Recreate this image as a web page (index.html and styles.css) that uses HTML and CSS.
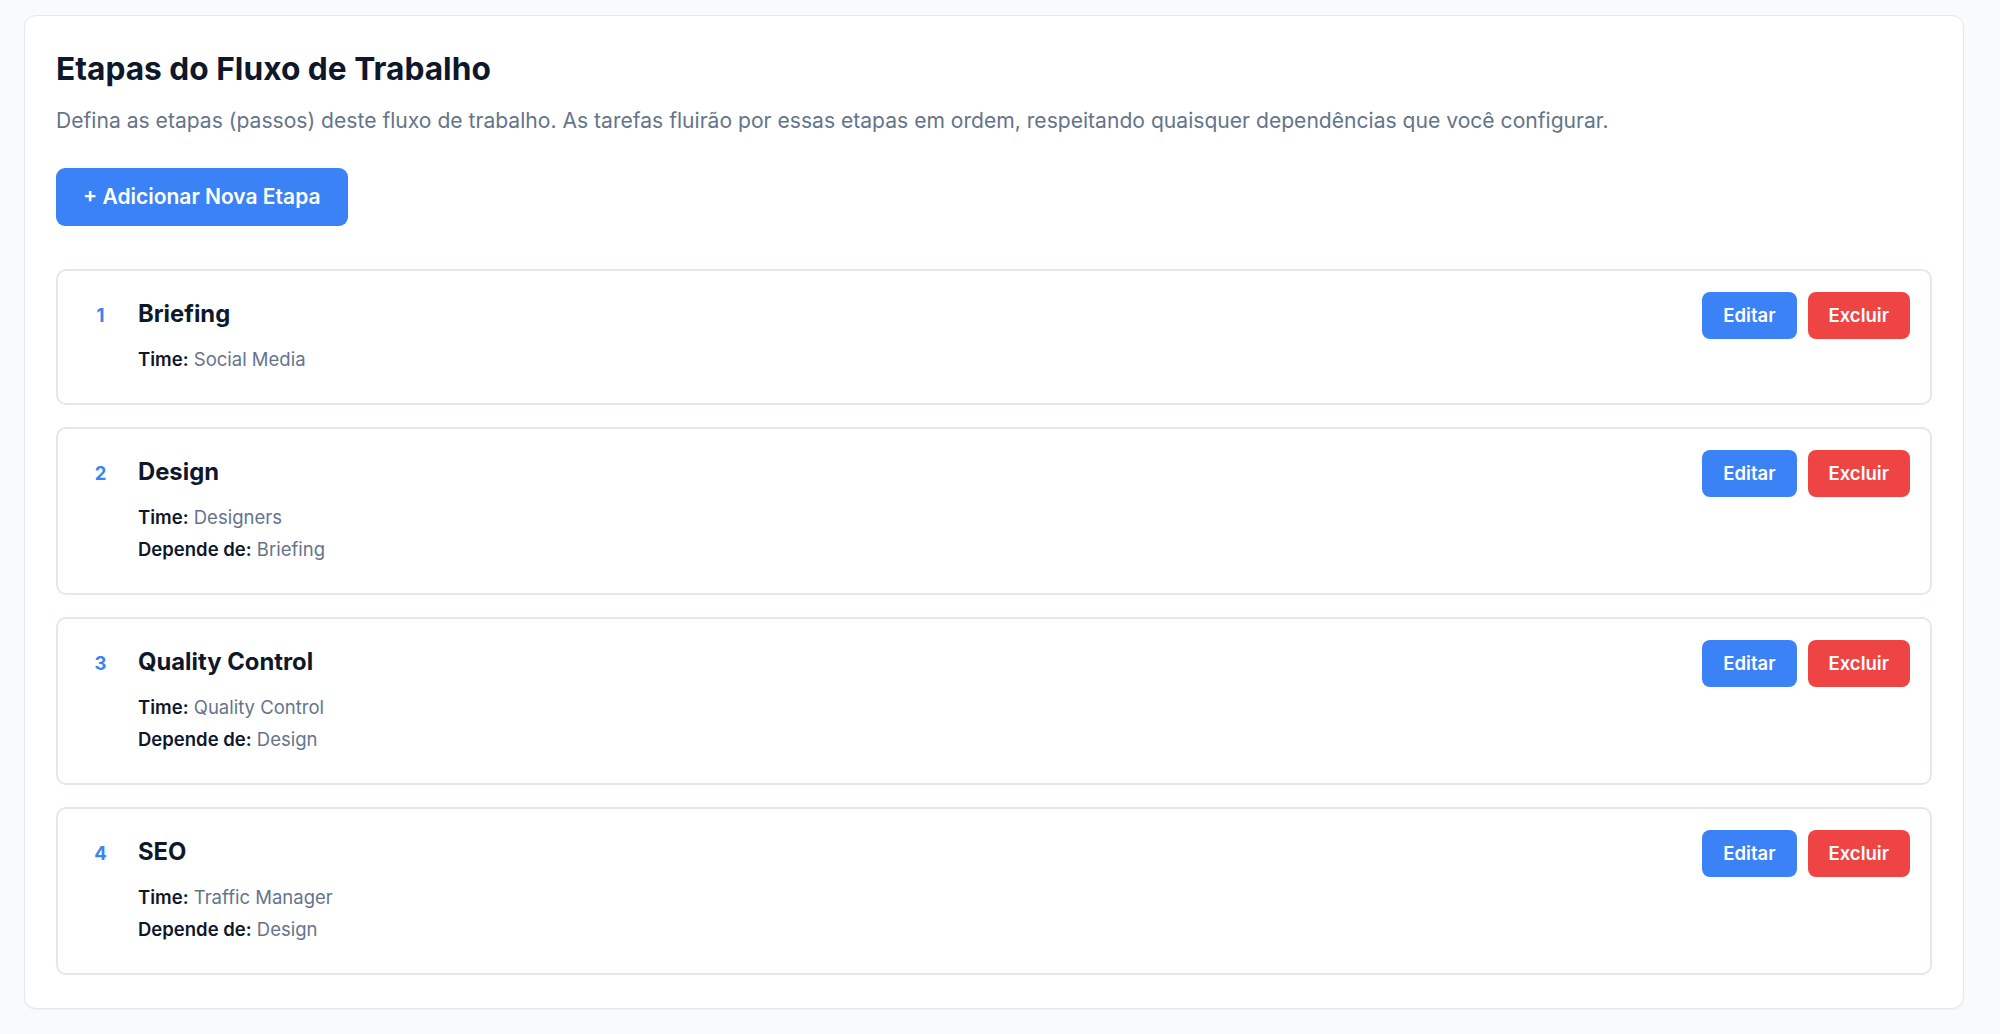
FILE: index.html
```html
<!DOCTYPE html>
<html lang="pt-BR">
<head>
<meta charset="utf-8">
<title>Etapas do Fluxo de Trabalho</title>
<link rel="stylesheet" href="styles.css">
</head>
<body>
  <section class="panel">
    <h1 class="panel-title">Etapas do Fluxo de Trabalho</h1>
    <p class="panel-desc">Defina as etapas (passos) deste fluxo de trabalho. As tarefas fluirão por essas etapas em ordem, respeitando quaisquer dependências que você configurar.</p>
    <button class="btn btn-add" type="button">+ Adicionar Nova Etapa</button>

    <div class="step-list">
      <article class="step">
        <div class="step-main">
          <div class="step-head">
            <span class="step-num">1</span>
            <h3 class="step-title">Briefing</h3>
          </div>
          <p class="step-meta"><strong>Time:</strong> Social Media</p>
        </div>
        <div class="step-actions">
          <button class="btn btn-sm btn-edit" type="button">Editar</button>
          <button class="btn btn-sm btn-delete" type="button">Excluir</button>
        </div>
      </article>

      <article class="step">
        <div class="step-main">
          <div class="step-head">
            <span class="step-num">2</span>
            <h3 class="step-title">Design</h3>
          </div>
          <p class="step-meta"><strong>Time:</strong> Designers</p>
          <p class="step-meta step-meta-next"><strong>Depende de:</strong> Briefing</p>
        </div>
        <div class="step-actions">
          <button class="btn btn-sm btn-edit" type="button">Editar</button>
          <button class="btn btn-sm btn-delete" type="button">Excluir</button>
        </div>
      </article>

      <article class="step">
        <div class="step-main">
          <div class="step-head">
            <span class="step-num">3</span>
            <h3 class="step-title">Quality Control</h3>
          </div>
          <p class="step-meta"><strong>Time:</strong> Quality Control</p>
          <p class="step-meta step-meta-next"><strong>Depende de:</strong> Design</p>
        </div>
        <div class="step-actions">
          <button class="btn btn-sm btn-edit" type="button">Editar</button>
          <button class="btn btn-sm btn-delete" type="button">Excluir</button>
        </div>
      </article>

      <article class="step">
        <div class="step-main">
          <div class="step-head">
            <span class="step-num">4</span>
            <h3 class="step-title">SEO</h3>
          </div>
          <p class="step-meta"><strong>Time:</strong> Traffic Manager</p>
          <p class="step-meta step-meta-next"><strong>Depende de:</strong> Design</p>
        </div>
        <div class="step-actions">
          <button class="btn btn-sm btn-edit" type="button">Editar</button>
          <button class="btn btn-sm btn-delete" type="button">Excluir</button>
        </div>
      </article>
    </div>
  </section>
</body>
</html>
```
FILE: styles.css
```css
* {
  box-sizing: border-box;
}

html, body {
  margin: 0;
  background: #f8fafc;
}

body {
  font-family: Inter, "Noto Sans", "Liberation Sans", sans-serif;
  color: #0f172a;
  padding: 15px 36px 27px 24px;
}

.panel {
  background: #ffffff;
  border: 1px solid #e2e8f0;
  border-radius: 12px;
  padding: 33px 31px 33px 31px;
  box-shadow: 0 1px 2px rgba(15, 23, 42, 0.04);
}

.panel-title {
  margin: 0;
  font-size: 31.7px;
  line-height: 40px;
  font-weight: 700;
  color: #0f172a;
}

.panel-desc {
  margin: 17px 0 0;
  font-size: 21.1px;
  line-height: 30px;
  color: #64748b;
}

.btn {
  font-family: inherit;
  border: 0;
  color: #ffffff;
  font-weight: 600;
  cursor: pointer;
}

.btn-add {
  display: block;
  margin-top: 32px;
  background: #3b82f6;
  font-size: 21px;
  line-height: 28px;
  padding: 15px 27px;
  border-radius: 9px;
}

.step-list {
  margin-top: 43px;
  display: flex;
  flex-direction: column;
  gap: 22.5px;
}

.step {
  display: flex;
  align-items: flex-start;
  border: 2px solid #e2e8f0;
  border-radius: 10px;
  padding: 20px 20px 30.5px 20px;
}

.step-main {
  flex: 1;
}

.step-head {
  display: flex;
  align-items: baseline;
  margin-top: 5px;
}

.step-num {
  width: 45px;
  margin-right: 15px;
  text-align: center;
  font-size: 18.5px;
  font-weight: 700;
  color: #3b82f6;
}

.step-title {
  margin: 0;
  font-size: 23.8px;
  line-height: 35px;
  font-weight: 700;
  color: #0f172a;
}

.step-meta {
  margin: 15px 0 0 60px;
  font-size: 18.5px;
  line-height: 26px;
  color: #64748b;
}

.step-meta strong {
  font-weight: 600;
  color: #0f172a;
}

.step-meta-next {
  margin-top: 6px;
}

.step-actions {
  display: flex;
  gap: 11px;
  margin-top: 1px;
}

.btn-sm {
  font-size: 18.5px;
  line-height: 25px;
  padding: 11px 21px;
  border-radius: 8px;
}

.btn-edit {
  background: #3b82f6;
}

.btn-delete {
  background: #ef4444;
}
```
